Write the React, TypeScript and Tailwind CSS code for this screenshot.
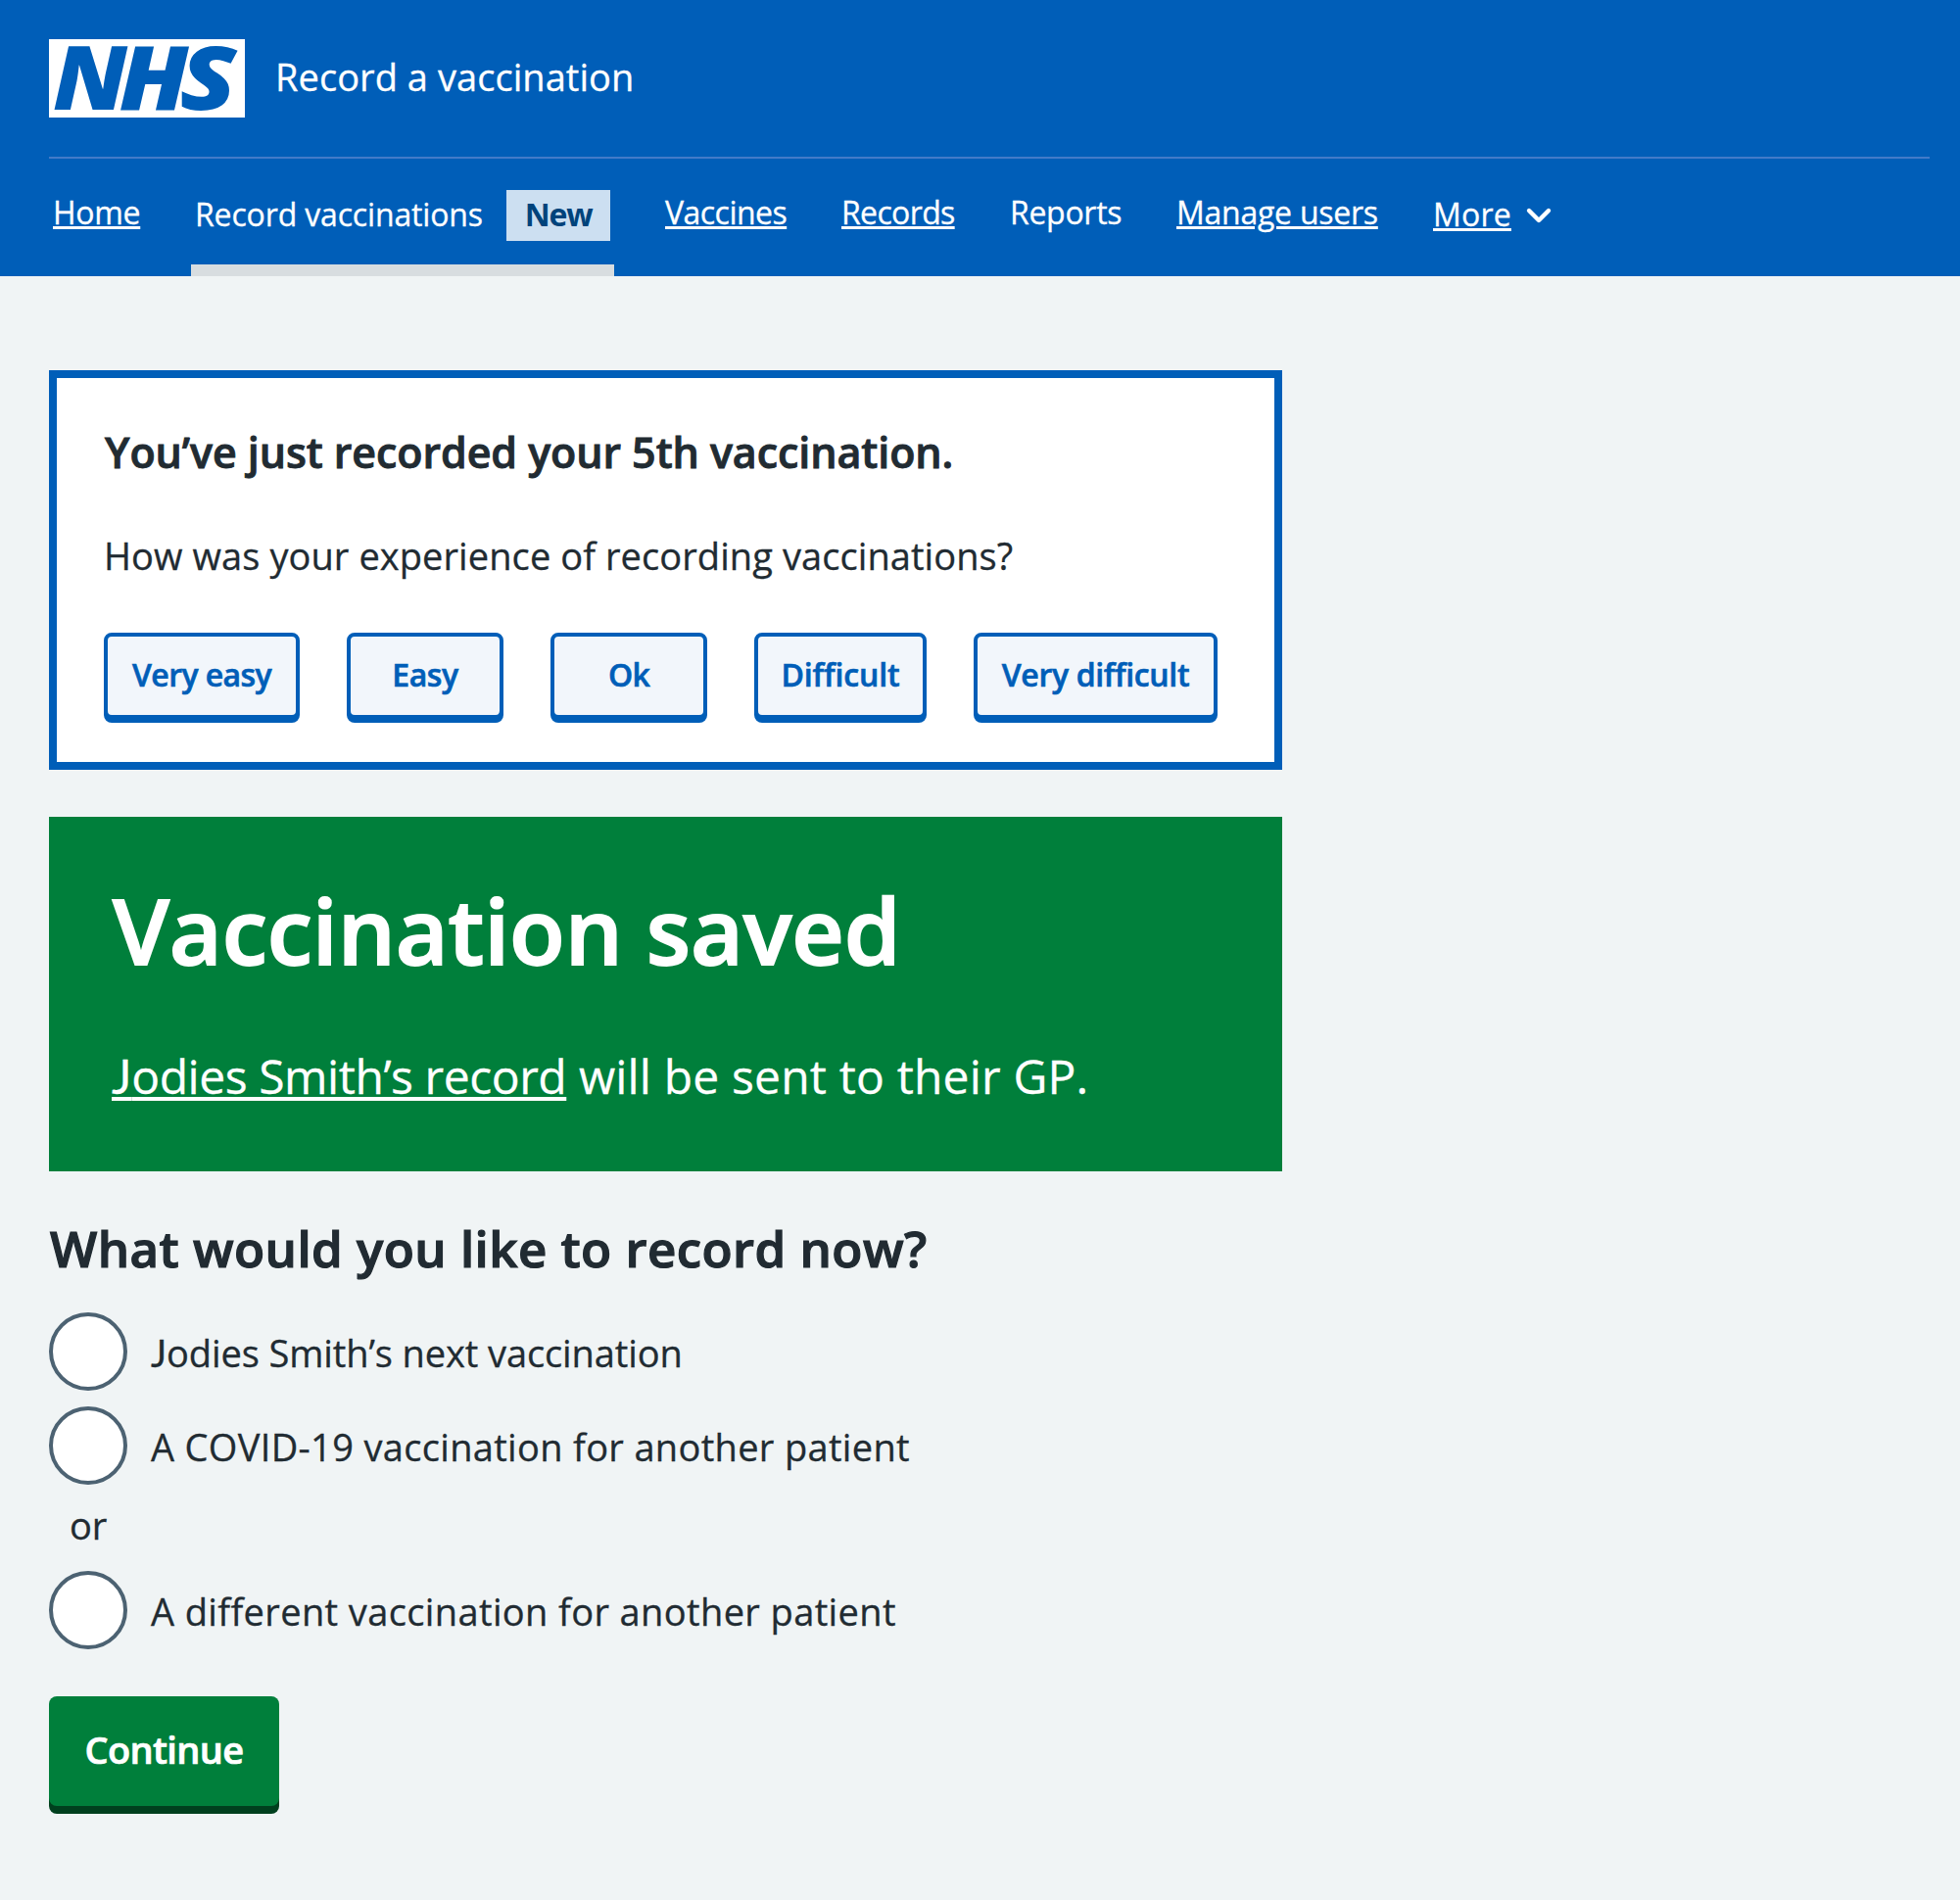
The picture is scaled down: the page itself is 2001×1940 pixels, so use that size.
import React from "react";

function NhsLogo() {
  return (
    <svg
      className="block h-20 w-[200px] shrink-0 overflow-visible"
      viewBox="0 0 200 80"
      role="img"
      aria-label="NHS"
    >
      <rect width="200" height="80" fill="#fff" />
      <g
        fill="#005eb8"
        fontFamily="'Open Sans', sans-serif"
        fontStyle="italic"
        fontWeight="800"
        fontSize="91"
      >
        <text x="4" y="72" textLength="76" lengthAdjust="spacingAndGlyphs">N</text>
        <text x="71.5" y="72" textLength="71" lengthAdjust="spacingAndGlyphs">H</text>
        <text x="133.5" y="72" textLength="58" lengthAdjust="spacingAndGlyphs">S</text>
      </g>
    </svg>
  );
}

/** Capital J that rests on the baseline instead of descending below it. */
function J() {
  return <span className="font-['Lato','Open_Sans',sans-serif] tracking-normal">J</span>;
}

function Header() {
  const link = "block whitespace-nowrap pt-[31px] text-[32px] leading-[48px]";
  const underlined = "underline decoration-[3px] underline-offset-[2px]";
  return (
    <header className="flex h-[282px] flex-col bg-[#005eb8] pr-[31px] pl-[50px] text-white">
      <div className="flex h-40 items-center">
        <NhsLogo />
        <span className="ml-[31px] pb-[5px] text-[38px] leading-[56px] tracking-[0.05px]">
          Record a vaccination
        </span>
      </div>
      <div className="h-[2px] bg-[#437bc8]" />
      <nav className="flex h-[120px] gap-14 pl-1">
        <a className={`${link} ${underlined} w-[89px] tracking-[-0.3px]`}>Home</a>
        <div className="-mx-1 flex w-[432px] flex-col justify-between px-1 pt-8">
          <div className="flex h-[52px] items-start gap-6">
            <span className="w-[294px] pt-px text-[32px] leading-[48px] tracking-[-0.15px] whitespace-nowrap">
              Record vaccinations
            </span>
            <span className="h-[52px] w-[106px] bg-[#ccdff1] text-center text-[32px] leading-[50px] font-bold tracking-[-1.2px] text-[#00437b] [-webkit-text-stroke:0px]">
              New
            </span>
          </div>
          <div className="-mx-1 h-3 bg-[#d8dde0]" />
        </div>
        <a className={`${link} ${underlined} w-[124px] tracking-[-0.53px]`}>Vaccines</a>
        <a className={`${link} ${underlined} w-[116px] tracking-[-0.65px]`}>Records</a>
        <a className={`${link} w-[114px] tracking-[-0.3px]`}>Reports</a>
        <a className={`${link} ${underlined} w-[206px] tracking-[-0.25px]`}>Manage users</a>
        <a className="flex items-start pt-[33px] text-[32px] leading-[48px]">
          <span className={`${underlined} w-20 tracking-[0.2px]`}>More</span>
          <svg className="mt-[15px] ml-[14px] h-[20px] w-[28px]" viewBox="0 0 28 20" fill="none">
            <path
              d="M4 5l10 10 10-10"
              stroke="#fff"
              strokeWidth="4.4"
              strokeLinecap="round"
              strokeLinejoin="round"
            />
          </svg>
        </a>
      </nav>
    </header>
  );
}

const ratings = [
  { label: "Very easy", style: "w-[200px] tracking-[-0.6px]" },
  { label: "Easy", style: "w-40 tracking-[-0.45px]" },
  { label: "Ok", style: "w-40 tracking-[-0.8px]" },
  { label: "Difficult", style: "w-[176px] tracking-[-0.15px]" },
  { label: "Very difficult", style: "w-[249px] tracking-[-0.35px]" },
];

function FeedbackCard() {
  return (
    <section className="h-[408px] border-8 border-[#005eb8] bg-white px-12 pt-[50px]">
      <h2 className="pl-px text-[43px] leading-[52px] font-semibold tracking-[-0.07px] whitespace-nowrap [-webkit-text-stroke:0.9px]">
        You’ve just recorded your 5th vaccination.
      </h2>
      <p className="mt-[51px] text-[38px] leading-[56px] tracking-[0.08px] whitespace-nowrap">
        How was your experience of recording vaccinations?
      </p>
      <div className="mt-[51px] flex gap-12">
        {ratings.map((r) => (
          <button
            key={r.label}
            className={`h-[88px] shrink-0 rounded-lg border-4 border-[#005eb8] bg-[#f2f6fb] pb-[2px] text-center text-[32px] leading-[48px] font-semibold whitespace-nowrap text-[#005eb8] shadow-[0_4px_0_#005eb8] [-webkit-text-stroke:0.6px] ${r.style}`}
          >
            {r.label}
          </button>
        ))}
      </div>
    </section>
  );
}

function Confirmation() {
  return (
    <section className="mt-12 h-[362px] bg-[#007f3b] px-16 pt-[59px] text-white">
      <h1 className="pl-px text-[93px] leading-[112px] font-semibold tracking-[-0.1px] whitespace-nowrap [-webkit-text-stroke:1.8px]">
        Vaccination saved
      </h1>
      <p className="mt-[58px] text-[48px] leading-[72px] tracking-[0.17px] whitespace-nowrap">
        <a className="tracking-[-0.45px] underline decoration-4 underline-offset-[3px] [text-decoration-skip-ink:none]">
          <J />
          odies Smith’s record
        </a>{" "}
        will be sent to their GP.
      </p>
    </section>
  );
}

function Radio({ children, className = "" }: { children: React.ReactNode; className?: string }) {
  return (
    <label className={`flex h-20 items-start ${className}`}>
      <span className="size-20 shrink-0 rounded-full border-4 border-[#4c6272] bg-white" />
      <span className="ml-6 pt-[13px] text-[38px] leading-[56px] whitespace-nowrap">
        {children}
      </span>
    </label>
  );
}

export default function App() {
  return (
    <div className="min-h-[1940px] w-[2001px] bg-[#f0f4f5] font-['Open_Sans',sans-serif] text-[#212b32] [-webkit-text-stroke:0.3px]">
      <Header />
      <main className="ml-[50px] w-[1259px] pt-24">
        <FeedbackCard />
        <Confirmation />
        <h2 className="mt-[46px] pl-px text-[51px] leading-[64px] font-semibold tracking-[0.46px] whitespace-nowrap [-webkit-text-stroke:1.2px]">
          What would you like to record now?
        </h2>
        <Radio className="mt-[34px] tracking-[-0.1px]">
          <J />
          odies Smith’s next vaccination
        </Radio>
        <Radio className="mt-4 tracking-[0.33px]">A COVID-19 vaccination for another patient</Radio>
        <p className="mt-[13px] ml-[21px] text-[38px] leading-[56px]">or</p>
        <Radio className="mt-[19px] tracking-[0.38px]">
          A different vaccination for another patient
        </Radio>
        <button className="mt-12 block h-28 w-[235px] rounded-lg bg-[#007f3b] pb-[4px] text-center text-[38px] font-semibold tracking-[-0.65px] text-white shadow-[0_8px_0_#00401e] [-webkit-text-stroke:0.7px]">
          Continue
        </button>
      </main>
    </div>
  );
}
